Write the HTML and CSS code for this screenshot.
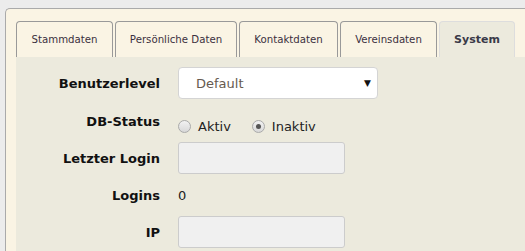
FILE: index.html
```html
<!DOCTYPE html>
<html lang="de">
<head>
	<meta charset="UTF-8">
	<title>Mitglied - System</title>
	<link rel="stylesheet" href="styles.css">
</head>
<body>
	<div class="panel">
		<ul class="tabs">
			<li class="tab">Stammdaten</li>
			<li class="tab">Persönliche Daten</li>
			<li class="tab">Kontaktdaten</li>
			<li class="tab">Vereinsdaten</li>
			<li class="tab active">System</li>
		</ul>
		<div class="tab-content">
			<div class="row row-select">
				<label class="label">Benutzerlevel</label>
				<div class="select">
					<span>Default</span>
					<span class="arrow">&#9660;</span>
				</div>
			</div>
			<div class="row row-radio">
				<label class="label">DB-Status</label>
				<div class="radios">
					<span class="radio"></span><span class="radio-text">Aktiv</span>
					<span class="radio checked"></span><span class="radio-text">Inaktiv</span>
				</div>
			</div>
			<div class="row row-input">
				<label class="label">Letzter Login</label>
				<div class="input"></div>
			</div>
			<div class="row row-text">
				<label class="label">Logins</label>
				<span class="value">0</span>
			</div>
			<div class="row row-input">
				<label class="label">IP</label>
				<div class="input"></div>
			</div>
		</div>
	</div>
</body>
</html>
```
FILE: styles.css
```css
*,
*::before,
*::after {
	box-sizing: border-box;
	margin: 0;
	padding: 0;
}

html,
body {
	height: 100%;
	overflow: hidden;
}

body {
	font-family: "DejaVu Sans", Verdana, sans-serif;
	background-color: #ececec;
	color: #222;
	padding: 8px 0 0 5px;
}

.panel {
	background-color: #faf4e4;
	border: 1px solid #aaa;
	border-right: none;
	border-bottom: none;
	border-radius: 5px 0 0 0;
	padding: 12px 0 0 10px;
	height: 243px;
	overflow: hidden;
}

.tabs {
	list-style: none;
	display: flex;
	gap: 2px;
	height: 36px;
}

.tab {
	font-size: 10.2px;
	color: #3a3040;
	border: 1px solid #999;
	border-bottom: none;
	border-radius: 4px 4px 0 0;
	display: flex;
	align-items: center;
	justify-content: center;
	white-space: nowrap;
	height: 36px;
}

.tab:nth-child(1) { width: 97px; }
.tab:nth-child(2) { width: 122px; }
.tab:nth-child(3) { width: 99px; }
.tab:nth-child(4) { width: 97px; }

.tab.active {
	background-color: #eceadd;
	border-color: #ddd;
	font-weight: bold;
	font-size: 11px;
	color: #3a3a48;
	width: 76px;
}

.tab-content {
	background-color: #eceadd;
	padding-top: 10px;
	height: 200px;
}

.row {
	display: flex;
	align-items: center;
}

.label {
	width: 144px;
	text-align: right;
	font-weight: bold;
	font-size: 13px;
	color: #111;
	margin-right: 18px;
}

.row-select {
	height: 32px;
}

.select {
	width: 200px;
	height: 32px;
	background-color: #fff;
	border: 1px solid #d4d4d4;
	border-radius: 4px;
	display: flex;
	align-items: center;
	justify-content: space-between;
	padding: 0 6px 0 17px;
	font-size: 13px;
	color: #665a50;
}

.select .arrow {
	font-size: 9px;
	color: #111;
}

.row-radio {
	align-items: flex-start;
	height: 35px;
	margin-top: 8px;
}

.row-radio .label {
	padding-top: 7px;
}

.radios {
	display: flex;
	align-items: center;
	padding-top: 12px;
	font-size: 13px;
	color: #222;
}

.radio {
	width: 13px;
	height: 13px;
	border: 1px solid #aaa;
	border-radius: 50%;
	background: linear-gradient(#f2f2f2, #d8d8d8);
	display: flex;
	align-items: center;
	justify-content: center;
	margin-right: 7px;
}

.radio.checked::after {
	content: "";
	width: 5px;
	height: 5px;
	border-radius: 50%;
	background-color: #555;
}

.radio-text {
	margin-right: 21px;
}

.row-input {
	height: 32px;
}

.input {
	width: 167px;
	height: 32px;
	background-color: #f0f0f0;
	border: 1px solid #ccc;
	border-radius: 3px;
}

.row-text {
	height: 26px;
	margin-top: 8px;
	margin-bottom: 8px;
}

.value {
	font-size: 13px;
	color: #222;
}
```
